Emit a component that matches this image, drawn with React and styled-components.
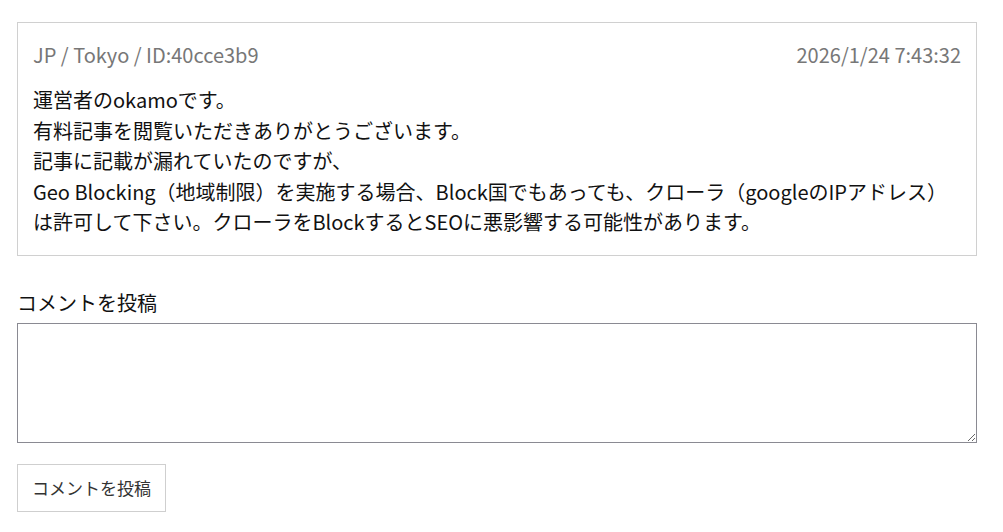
import React, { useState } from 'react';
import styled, { createGlobalStyle } from 'styled-components';

const GlobalStyle = createGlobalStyle`
  html, body {
    margin: 0;
    padding: 0;
    background: #fff;
  }
  body {
    font-family: "Noto Sans CJK JP", "Noto Sans", sans-serif;
    color: #111;
  }
`;

const Page = styled.div`
  width: 960px;
  padding: 22px 0 20px 17px;
`;

const CommentCard = styled.div`
  border: 1px solid #d0d0d0;
  padding: 17px 15px 17px 15px;
`;

const MetaRow = styled.div`
  display: flex;
  justify-content: space-between;
  align-items: center;
  color: #777;
  font-size: 20px;
  line-height: 30px;
  margin-bottom: 15px;
`;

const Body = styled.div`
  font-size: 20px;
  line-height: 30.5px;
  color: #111;
`;

const Line = styled.div`
  white-space: nowrap;
`;

const FormLabel = styled.label`
  display: block;
  margin-top: 32px;
  margin-bottom: 5px;
  font-size: 20px;
  line-height: 30px;
  color: #111;
`;

const TextArea = styled.textarea`
  display: block;
  box-sizing: border-box;
  width: 960px;
  height: 120px;
  margin: 0;
  padding: 6px 8px;
  border: 1px solid #8a8a92;
  border-radius: 0;
  font-family: inherit;
  font-size: 16px;
  resize: both;
  &:focus {
    outline: none;
  }
`;

const SubmitButton = styled.button`
  display: block;
  box-sizing: border-box;
  margin-top: 21px;
  height: 48px;
  padding: 0 14px;
  background: #fff;
  border: 1px solid #cfcfcf;
  font-family: inherit;
  font-size: 17px;
  color: #333;
  cursor: pointer;
`;

const lines = [
  '運営者のokamoです。',
  '有料記事を閲覧いただきありがとうございます。',
  '記事に記載が漏れていたのですが、',
  'Geo Blocking（地域制限）を実施する場合、Block国でもあっても、クローラ（googleのIPアドレス）',
  'は許可して下さい。クローラをBlockするとSEOに悪影響する可能性があります。',
];

export default function App() {
  const [text, setText] = useState('');
  return (
    <>
      <GlobalStyle />
      <Page>
        <CommentCard>
          <MetaRow>
            <span>JP / Tokyo / ID:40cce3b9</span>
            <span>2026/1/24 7:43:32</span>
          </MetaRow>
          <Body>
            {lines.map((l, i) => (
              <Line key={i}>{l}</Line>
            ))}
          </Body>
        </CommentCard>
        <FormLabel htmlFor="comment">コメントを投稿</FormLabel>
        <TextArea id="comment" value={text} onChange={(e) => setText(e.target.value)} />
        <SubmitButton>コメントを投稿</SubmitButton>
      </Page>
    </>
  );
}
